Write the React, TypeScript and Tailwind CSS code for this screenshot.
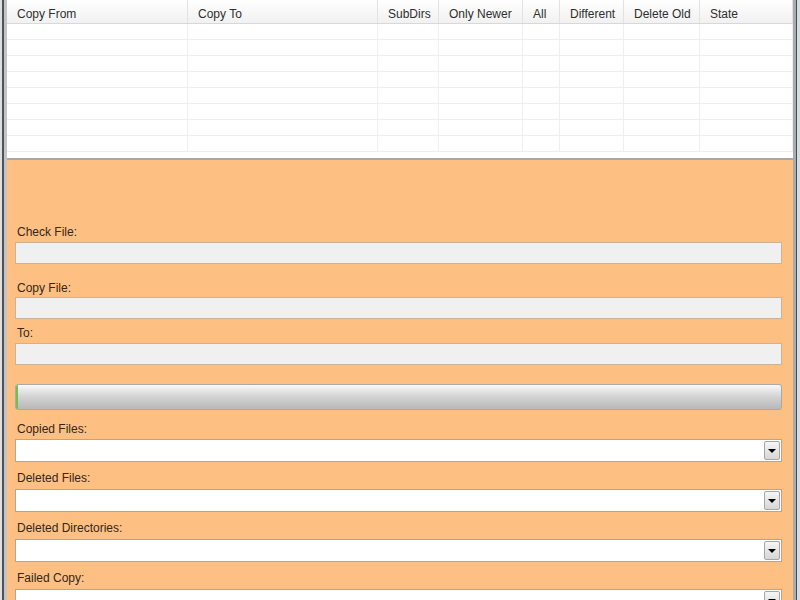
type Column = { title: string; width: string };

const columns: Column[] = [
  { title: 'Copy From', width: 'w-[181px]' },
  { title: 'Copy To', width: 'w-[190px]' },
  { title: 'SubDirs', width: 'w-[61px]' },
  { title: 'Only Newer', width: 'w-[84px]' },
  { title: 'All', width: 'w-[37px]' },
  { title: 'Different', width: 'w-[64px]' },
  { title: 'Delete Old', width: 'w-[76px]' },
  { title: 'State', width: 'w-[93px]' },
];

const rows = Array.from({ length: 8 });

function Label({ text, className }: { text: string; className?: string }) {
  return (
    <div className={`h-[14px] shrink-0 leading-[14px] pl-[2px] text-[12px] text-[#33261b] ${className ?? ''}`}>
      {text}
    </div>
  );
}

function ReadOnlyField() {
  return <div className="h-[22px] shrink-0 border border-[#c9b49a] bg-[#f0f0f0]" />;
}

function ComboBox() {
  return (
    <div className="h-[23px] shrink-0 flex items-center border border-[#b9a58c] bg-white pr-[1px]">
      <div className="flex-1" />
      <div className="h-[19px] w-[16px] flex items-center justify-center border border-[#a6a6a6] bg-gradient-to-b from-[#f6f6f6] to-[#d6d6d6] rounded-[2px]">
        <div className="w-0 h-0 border-l-[4px] border-r-[4px] border-t-[4px] border-l-transparent border-r-transparent border-t-black" />
      </div>
    </div>
  );
}

function FileList() {
  return (
    <div className="h-[160px] shrink-0 flex flex-col bg-white border-b-2 border-[#a8a8a8] overflow-hidden">
      <div className="h-[24px] flex shrink-0 border-b border-[#d8d8d8] bg-gradient-to-b from-white to-[#f1f1f1]">
        {columns.map((col) => (
          <div
            key={col.title}
            className={`${col.width} shrink-0 h-full flex items-center pl-[10px] pt-[4px] text-[12px] text-[#2e2e2e] border-r border-[#e2e2e2]`}
          >
            {col.title}
          </div>
        ))}
      </div>
      {rows.map((_, i) => (
        <div key={i} className="h-[16px] flex shrink-0 border-b border-[#efefef]">
          {columns.map((col) => (
            <div key={col.title} className={`${col.width} shrink-0 h-full border-r border-[#f0f0f0]`} />
          ))}
        </div>
      ))}
    </div>
  );
}

export default function App() {
  return (
    <div
      className="w-[800px] h-[600px] flex overflow-hidden bg-[#d6d6d6]"
      style={{ fontFamily: '"Liberation Sans", Arial, sans-serif' }}
    >
      {/* left window frame */}
      <div className="w-[2px] shrink-0 bg-[#dedede]" />
      <div className="w-[2px] shrink-0 bg-[#4e5358]" />
      <div className="w-[3px] shrink-0 bg-[#c4c4c4]" />

      <div className="w-[786px] shrink-0 flex flex-col overflow-hidden">
        <FileList />

        <div className="flex-1 bg-[#fec082] pl-[8px] pr-[11px] pt-[65px] flex flex-col">
          <Label text="Check File:" className="mb-[3px]" />
          <ReadOnlyField />

          <Label text="Copy File:" className="mt-[17px] mb-[2px]" />
          <ReadOnlyField />

          <Label text="To:" className="mt-[7px] mb-[3px]" />
          <ReadOnlyField />

          <div className="mt-[19px] h-[26px] shrink-0 flex border border-[#a9a9a9] rounded-[3px] overflow-hidden bg-gradient-to-b from-[#f9f9f9] via-[#d2d2d2] to-[#b8b8b8]">
            <div className="w-[2px] bg-[#6cc24a]" />
          </div>

          <Label text="Copied Files:" className="mt-[12px] mb-[3px]" />
          <ComboBox />

          <Label text="Deleted Files:" className="mt-[9px] mb-[4px]" />
          <ComboBox />

          <Label text="Deleted Directories:" className="mt-[9px] mb-[4px]" />
          <ComboBox />

          <Label text="Failed Copy:" className="mt-[9px] mb-[4px]" />
          <ComboBox />
        </div>
      </div>

      {/* right window frame */}
      <div className="w-[3px] shrink-0 bg-[#a9acaf]" />
      <div className="w-[1px] shrink-0 bg-[#35505e]" />
      <div className="w-[3px] shrink-0 bg-[#d9dcdd]" />
    </div>
  );
}
